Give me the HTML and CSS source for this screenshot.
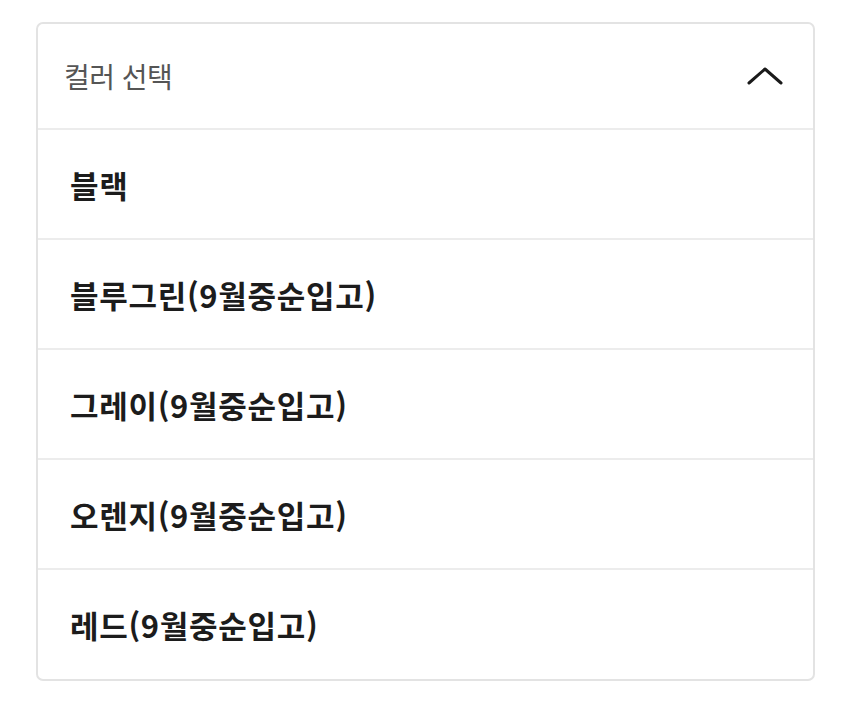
FILE: index.html
```html
<!DOCTYPE html>
<html lang="ko">
<head>
<meta charset="utf-8">
<title>컬러 선택</title>
<link rel="stylesheet" href="styles.css">
</head>
<body>
<div class="select">
  <div class="select-head">
    <span class="select-label">컬러 선택</span>
    <svg class="chevron" width="36" height="18" viewBox="0 0 36 18" aria-hidden="true">
      <path d="M2 16 L18 2 L34 16" fill="none" stroke="#1a1a1a" stroke-width="3" stroke-linecap="round" stroke-linejoin="round"/>
    </svg>
  </div>
  <ul class="options">
    <li class="option">블랙</li>
    <li class="option">블루그린(9월중순입고)</li>
    <li class="option">그레이(9월중순입고)</li>
    <li class="option">오렌지(9월중순입고)</li>
    <li class="option">레드(9월중순입고)</li>
  </ul>
</div>
</body>
</html>
```
FILE: styles.css
```css
html, body {
  margin: 0;
  padding: 0;
  background: #ffffff;
}

body {
  padding: 22px 35px 0 36px;
  font-family: "Noto Sans CJK KR", "Noto Sans", sans-serif;
}

.select {
  border: 2px solid #e3e3e3;
  border-radius: 7px;
  background: #fff;
  overflow: hidden;
}

.select-head {
  height: 104px;
  display: flex;
  align-items: center;
  justify-content: space-between;
  padding: 0 30px 0 26px;
  border-bottom: 2px solid #ececec;
}

.select-label {
  font-size: 28px;
  color: #555;
  letter-spacing: -0.5px;
}

.chevron {
  display: block;
}

.options {
  list-style: none;
  margin: 0;
  padding: 0;
}

.option {
  height: 108px;
  display: flex;
  align-items: center;
  padding-left: 32px;
  font-size: 31px;
  font-weight: 700;
  color: #1c1c1c;
  letter-spacing: 0.7px;
  border-bottom: 2px solid #ececec;
}

.option:last-child {
  border-bottom: none;
  height: 109px;
}
```
